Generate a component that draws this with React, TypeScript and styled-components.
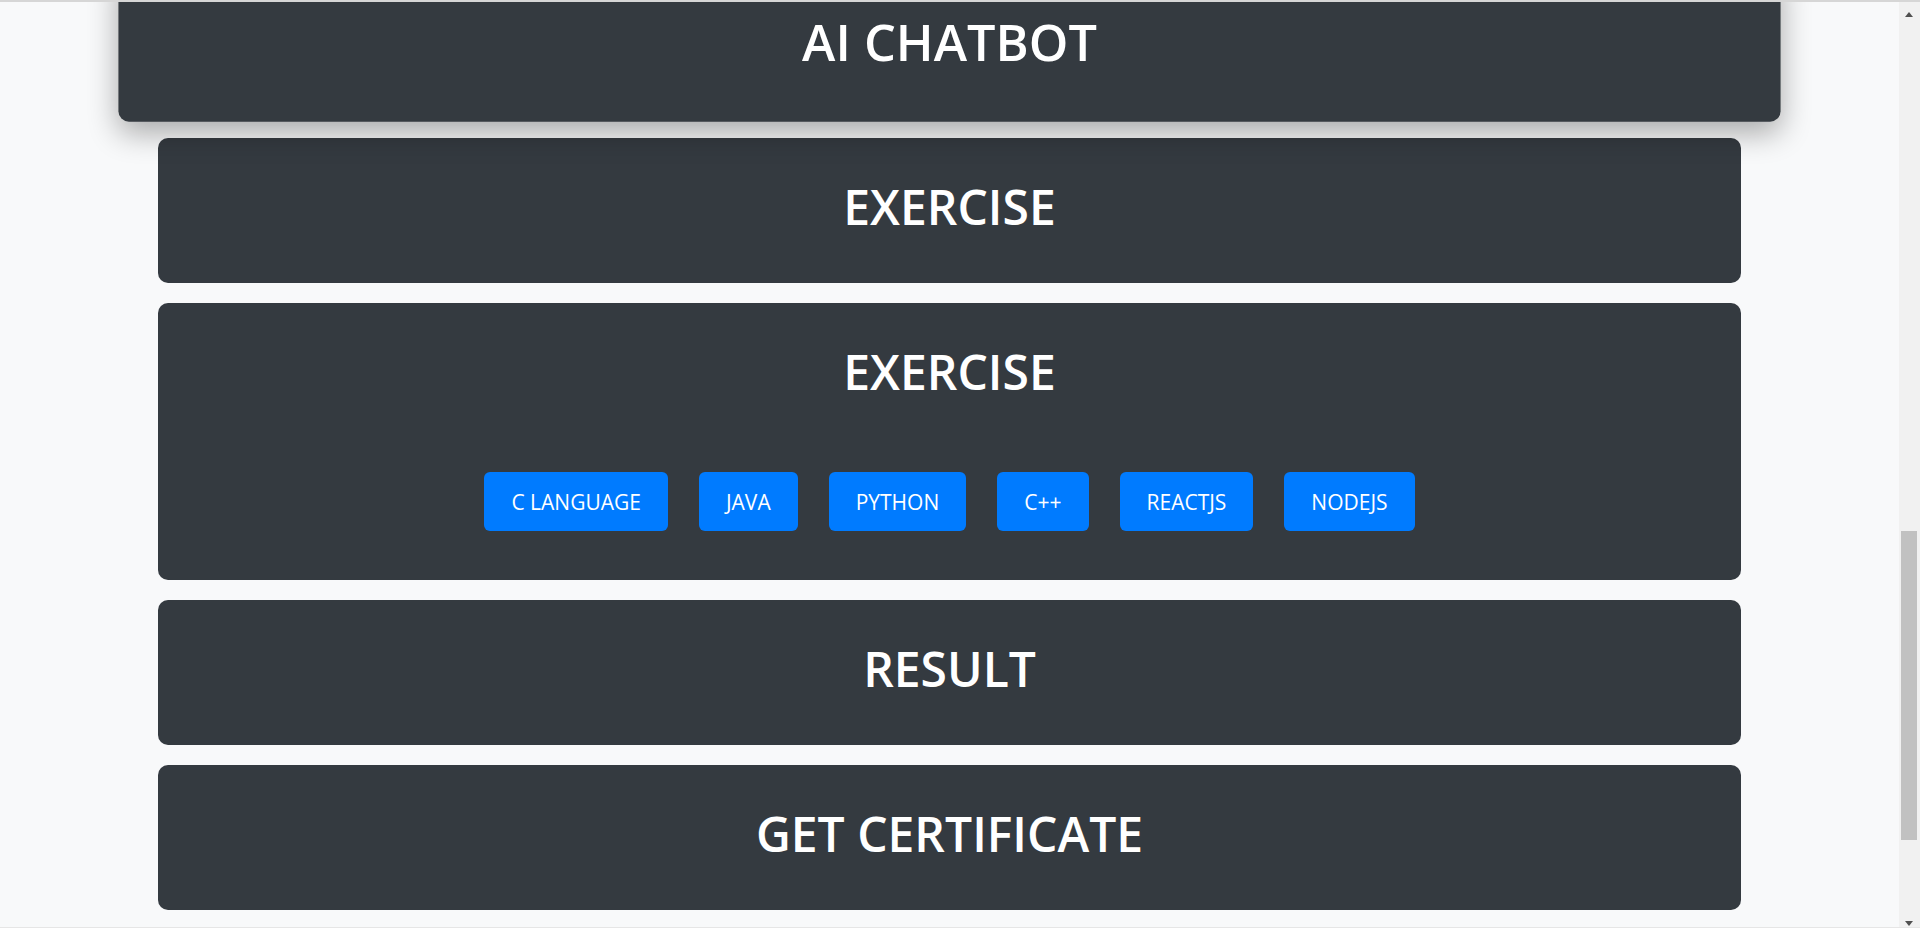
import React from "react";
import styled, { createGlobalStyle } from "styled-components";

const GlobalStyle = createGlobalStyle`
  html {
    background: #f8f9fa;
  }
  body {
    margin: 0;
    background: #f8f9fa;
    font-family: "Open Sans", "Noto Sans", "Liberation Sans", sans-serif;
    color: #ffffff;
  }
  * { box-sizing: border-box; }
`;

const Page = styled.main`
  height: 100vh;
  overflow: hidden;
  padding-right: 21px;
`;

const Stack = styled.div`
  width: 1583px;
  margin: -27px auto 0;
  display: flex;
  flex-direction: column;
  gap: 20px;
`;

const Card = styled.section<{ $raised?: boolean }>`
  background: #343a40;
  border-radius: 10px;
  padding: 40px 40px;
  text-align: center;
  transform: ${(p) => (p.$raised ? "scale(1.05)" : "none")};
  box-shadow: ${(p) =>
    p.$raised ? "0 10px 28px rgba(0, 0, 0, 0.32)" : "none"};
  position: relative;
  z-index: ${(p) => (p.$raised ? 1 : 0)};
`;

const Title = styled.h1`
  margin: 0 0 8px;
  font-size: 48px;
  line-height: 57px;
  font-weight: 600;
  color: #ffffff;
`;

const ButtonRow = styled.div`
  display: flex;
  justify-content: center;
  gap: 31px;
  margin: 72px 0 9px;
`;

const LangButton = styled.button`
  background: #007bff;
  color: #ffffff;
  border: none;
  border-radius: 6px;
  padding: 11.5px 27px;
  font-family: "Open Sans", "Noto Sans", "Liberation Sans", sans-serif;
  font-size: 21px;
  line-height: 36px;
  font-weight: 400;
  cursor: pointer;
`;

/* Browser chrome overlays seen in the capture */
const Edge = styled.div<{ $bottom?: boolean }>`
  position: fixed;
  left: 0;
  right: 0;
  ${(p) =>
    p.$bottom
      ? "bottom: 0; height: 1px; background: #e6e6e6;"
      : "top: 0; height: 2px; background: #d6d6d6;"}
  z-index: 5;
`;

const ScrollTrack = styled.div`
  position: fixed;
  top: 0;
  right: 0;
  bottom: 0;
  width: 21px;
  background: #f1f1f1;
  z-index: 4;
`;

const ScrollThumb = styled.div`
  position: absolute;
  left: 2px;
  right: 3px;
  top: 531px;
  height: 309px;
  background: #c1c1c1;
`;

const Arrow = styled.div<{ $down?: boolean }>`
  position: absolute;
  left: 6px;
  width: 0;
  height: 0;
  border-left: 4.5px solid transparent;
  border-right: 4.5px solid transparent;
  ${(p) =>
    p.$down
      ? "bottom: 2px; border-top: 5px solid #505050;"
      : "top: 12px; border-bottom: 5px solid #505050;"}
`;

const languages = ["C LANGUAGE", "JAVA", "PYTHON", "C++", "REACTJS", "NODEJS"];

export default function App() {
  return (
    <>
      <GlobalStyle />
      <Edge />
      <Page>
        <Stack>
          <Card $raised>
            <Title>AI CHATBOT</Title>
          </Card>
          <Card>
            <Title>EXERCISE</Title>
          </Card>
          <Card>
            <Title>EXERCISE</Title>
            <ButtonRow>
              {languages.map((l) => (
                <LangButton key={l}>{l}</LangButton>
              ))}
            </ButtonRow>
          </Card>
          <Card>
            <Title>RESULT</Title>
          </Card>
          <Card>
            <Title>GET CERTIFICATE</Title>
          </Card>
        </Stack>
      </Page>
      <ScrollTrack>
        <Arrow />
        <ScrollThumb />
        <Arrow $down />
      </ScrollTrack>
      <Edge $bottom />
    </>
  );
}
